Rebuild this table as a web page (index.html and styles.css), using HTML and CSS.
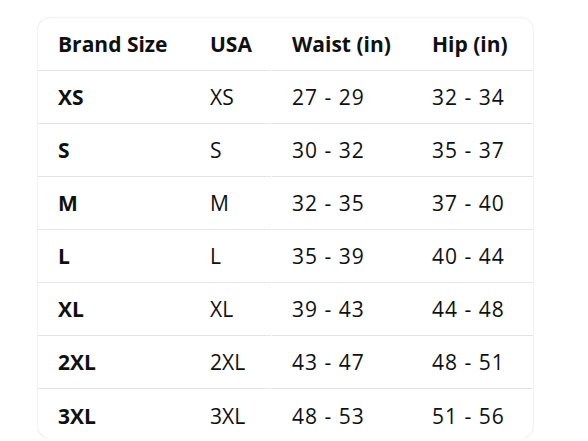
FILE: index.html
```html
<!DOCTYPE html>
<html>
<head>
<meta charset="utf-8">
<link rel="stylesheet" href="styles.css">
</head>
<body>
<div class="card">
  <div class="row head">
    <div class="c c1">Brand Size</div><div class="c c2">USA</div><div class="c c3">Waist (in)</div><div class="c c4">Hip (in)</div>
  </div>
  <div class="row"><div class="c c1 b">XS</div><div class="c c2">XS</div><div class="c c3">27 - 29</div><div class="c c4">32 - 34</div></div>
  <div class="row"><div class="c c1 b">S</div><div class="c c2">S</div><div class="c c3">30 - 32</div><div class="c c4">35 - 37</div></div>
  <div class="row"><div class="c c1 b">M</div><div class="c c2">M</div><div class="c c3">32 - 35</div><div class="c c4">37 - 40</div></div>
  <div class="row"><div class="c c1 b">L</div><div class="c c2">L</div><div class="c c3">35 - 39</div><div class="c c4">40 - 44</div></div>
  <div class="row"><div class="c c1 b">XL</div><div class="c c2">XL</div><div class="c c3">39 - 43</div><div class="c c4">44 - 48</div></div>
  <div class="row"><div class="c c1 b">2XL</div><div class="c c2">2XL</div><div class="c c3">43 - 47</div><div class="c c4">48 - 51</div></div>
  <div class="row last"><div class="c c1 b">3XL</div><div class="c c2">3XL</div><div class="c c3">48 - 53</div><div class="c c4">51 - 56</div></div>
</div>
</body>
</html>
```
FILE: styles.css
```css
html, body { margin: 0; padding: 0; background: #fff; }
body {
  font-family: "Open Sans", "Noto Sans", sans-serif;
  color: #0f1111;
  padding: 18px 0 0 38px;
}
.card {
  width: 495px;
  height: 420px;
  border-radius: 12px;
  box-shadow: 0 0 2px rgba(0,0,0,0.2);
  overflow: hidden;
}
.row {
  display: grid;
  grid-template-columns: 152px 82px 140px 121px;
  height: 53px;
}
.c {
  display: flex;
  align-items: center;
  padding-left: 20px;
  font-size: 21px;
  border-bottom: 1px solid #e3e6e6;
  box-sizing: border-box;
}
.c2 { margin-right: 1px; }
.c3, .c4 { letter-spacing: 1px; }
.head .c { font-weight: 700; letter-spacing: 0; }
.b { font-weight: 700; }
.last .c { border-bottom: none; }
```
